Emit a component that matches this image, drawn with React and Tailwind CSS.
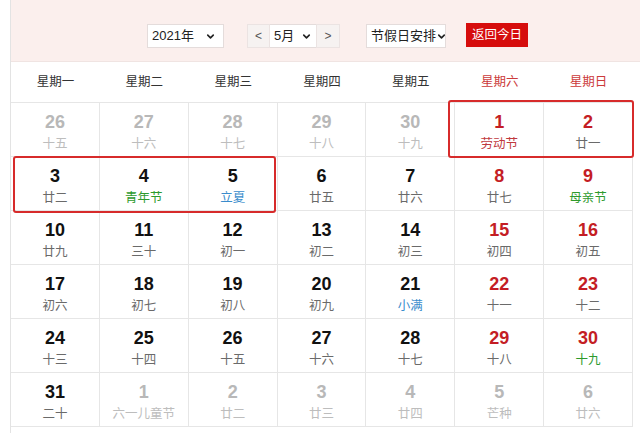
import { ChevronDown } from "lucide-react"

const FONT = "font-['Liberation_Sans','Noto_Sans_CJK_SC',sans-serif]"

const weekdays = ["星期一", "星期二", "星期三", "星期四", "星期五", "星期六", "星期日"]

// n: number, l: lunar / festival, t: number tone, c: label tone
const rows = [
  [
    { n: 26, l: "十五", t: "dim", c: "dim" },
    { n: 27, l: "十六", t: "dim", c: "dim" },
    { n: 28, l: "十七", t: "dim", c: "dim" },
    { n: 29, l: "十八", t: "dim", c: "dim" },
    { n: 30, l: "十九", t: "dim", c: "dim" },
    { n: 1, l: "劳动节", t: "red", c: "red" },
    { n: 2, l: "廿一", t: "red" },
  ],
  [
    { n: 3, l: "廿二" },
    { n: 4, l: "青年节", c: "green" },
    { n: 5, l: "立夏", c: "blue" },
    { n: 6, l: "廿五" },
    { n: 7, l: "廿六" },
    { n: 8, l: "廿七", t: "red" },
    { n: 9, l: "母亲节", t: "red", c: "green" },
  ],
  [
    { n: 10, l: "廿九" },
    { n: 11, l: "三十" },
    { n: 12, l: "初一" },
    { n: 13, l: "初二" },
    { n: 14, l: "初三" },
    { n: 15, l: "初四", t: "red" },
    { n: 16, l: "初五", t: "red" },
  ],
  [
    { n: 17, l: "初六" },
    { n: 18, l: "初七" },
    { n: 19, l: "初八" },
    { n: 20, l: "初九" },
    { n: 21, l: "小满", c: "blue" },
    { n: 22, l: "十一", t: "red" },
    { n: 23, l: "十二", t: "red" },
  ],
  [
    { n: 24, l: "十三" },
    { n: 25, l: "十四" },
    { n: 26, l: "十五" },
    { n: 27, l: "十六" },
    { n: 28, l: "十七" },
    { n: 29, l: "十八", t: "red" },
    { n: 30, l: "十九", t: "red", c: "green" },
  ],
  [
    { n: 31, l: "二十" },
    { n: 1, l: "六一儿童节", t: "dim", c: "dim" },
    { n: 2, l: "廿二", t: "dim", c: "dim" },
    { n: 3, l: "廿三", t: "dim", c: "dim" },
    { n: 4, l: "廿四", t: "dim", c: "dim" },
    { n: 5, l: "芒种", t: "dim", c: "dim" },
    { n: 6, l: "廿六", t: "dim", c: "dim" },
  ],
]

const numTone = {
  dim: "text-[#b8b8b8]",
  red: "text-[#c41d24]",
}

const labelTone = {
  dim: "text-[#bdbdbd]",
  red: "text-[#c0393e]",
  green: "text-[#2d9a2d]",
  blue: "text-[#3a8ccc]",
}

const Cell = ({ day }) => (
  <div className="h-[54px] border-r border-b border-[#e6e6e6] flex flex-col items-center pt-[9px]">
    <span className={`text-[18px] font-bold leading-[20px] ${numTone[day.t] || "text-[#111]"}`}>
      {day.n}
    </span>
    <span className={`mt-[4px] text-[12.5px] leading-[16px] ${labelTone[day.c] || "text-[#6a6a6a]"}`}>
      {day.l}
    </span>
  </div>
)

const Select = ({ label, className }) => (
  <div className={`h-[24px] bg-white border border-[#e4dcdb] flex items-center justify-between whitespace-nowrap pl-[4px] pr-[4px] text-[13px] text-[#222] ${className}`}>
    <span>{label}</span>
    <ChevronDown size={11} strokeWidth={3.5} className="shrink-0 text-[#222]" />
  </div>
)

export default function App() {
  return (
    <div className={`relative w-[640px] h-[433px] bg-white overflow-hidden ${FONT}`}>
      <div className="ml-[10px] h-full border-l border-[#e3e3e3]">
        <div className="h-[62px] bg-[#fbefed] border-b border-[#f0e4e2] flex items-start pt-[24px] pl-[136px]">
          <Select label="2021年" className="w-[77px] pr-[7px]" />
          <div className="ml-[23px] flex">
            <div className="w-[23px] h-[24px] bg-[#f6f2f1] border border-[#ebe3e2] flex items-center justify-center text-[12px] text-[#555]">
              &lt;
            </div>
            <Select label="5月" className="w-[46px] border-x-0" />
            <div className="w-[24px] h-[24px] bg-[#f6f2f1] border border-[#ebe3e2] flex items-center justify-center text-[12px] text-[#555]">
              &gt;
            </div>
          </div>
          <Select label="节假日安排" className="ml-[26px] w-[80px] pl-[3px] pr-[2px] text-[12px]" />
          <div className="ml-[20px] -mt-[1px] w-[62px] h-[24px] bg-[#d60d0d] text-white text-[12.5px] flex items-center justify-center">
            返回今日
          </div>
        </div>

        <div className="w-[622px]">
          <div className="grid grid-cols-7 h-[41px] border-b border-[#e6e6e6]">
            {weekdays.map((w, i) => (
              <div
                key={w}
                className={`flex items-center justify-center text-[12.5px] ${i > 4 ? "text-[#cc3b3b]" : "text-[#333]"}`}
              >
                {w}
              </div>
            ))}
          </div>
          {rows.map((row, r) => (
            <div key={r} className="grid grid-cols-7">
              {row.map((day, i) => (
                <Cell key={i} day={day} />
              ))}
            </div>
          ))}
        </div>
      </div>

      {/* red highlight boxes */}
      <div className="absolute left-[448px] top-[100px] w-[186px] h-[58px] border-2 border-[#d72b2b] rounded-[3px]" />
      <div className="absolute left-[13px] top-[156px] w-[263px] h-[57px] border-2 border-[#d72b2b] rounded-[3px]" />
    </div>
  )
}
